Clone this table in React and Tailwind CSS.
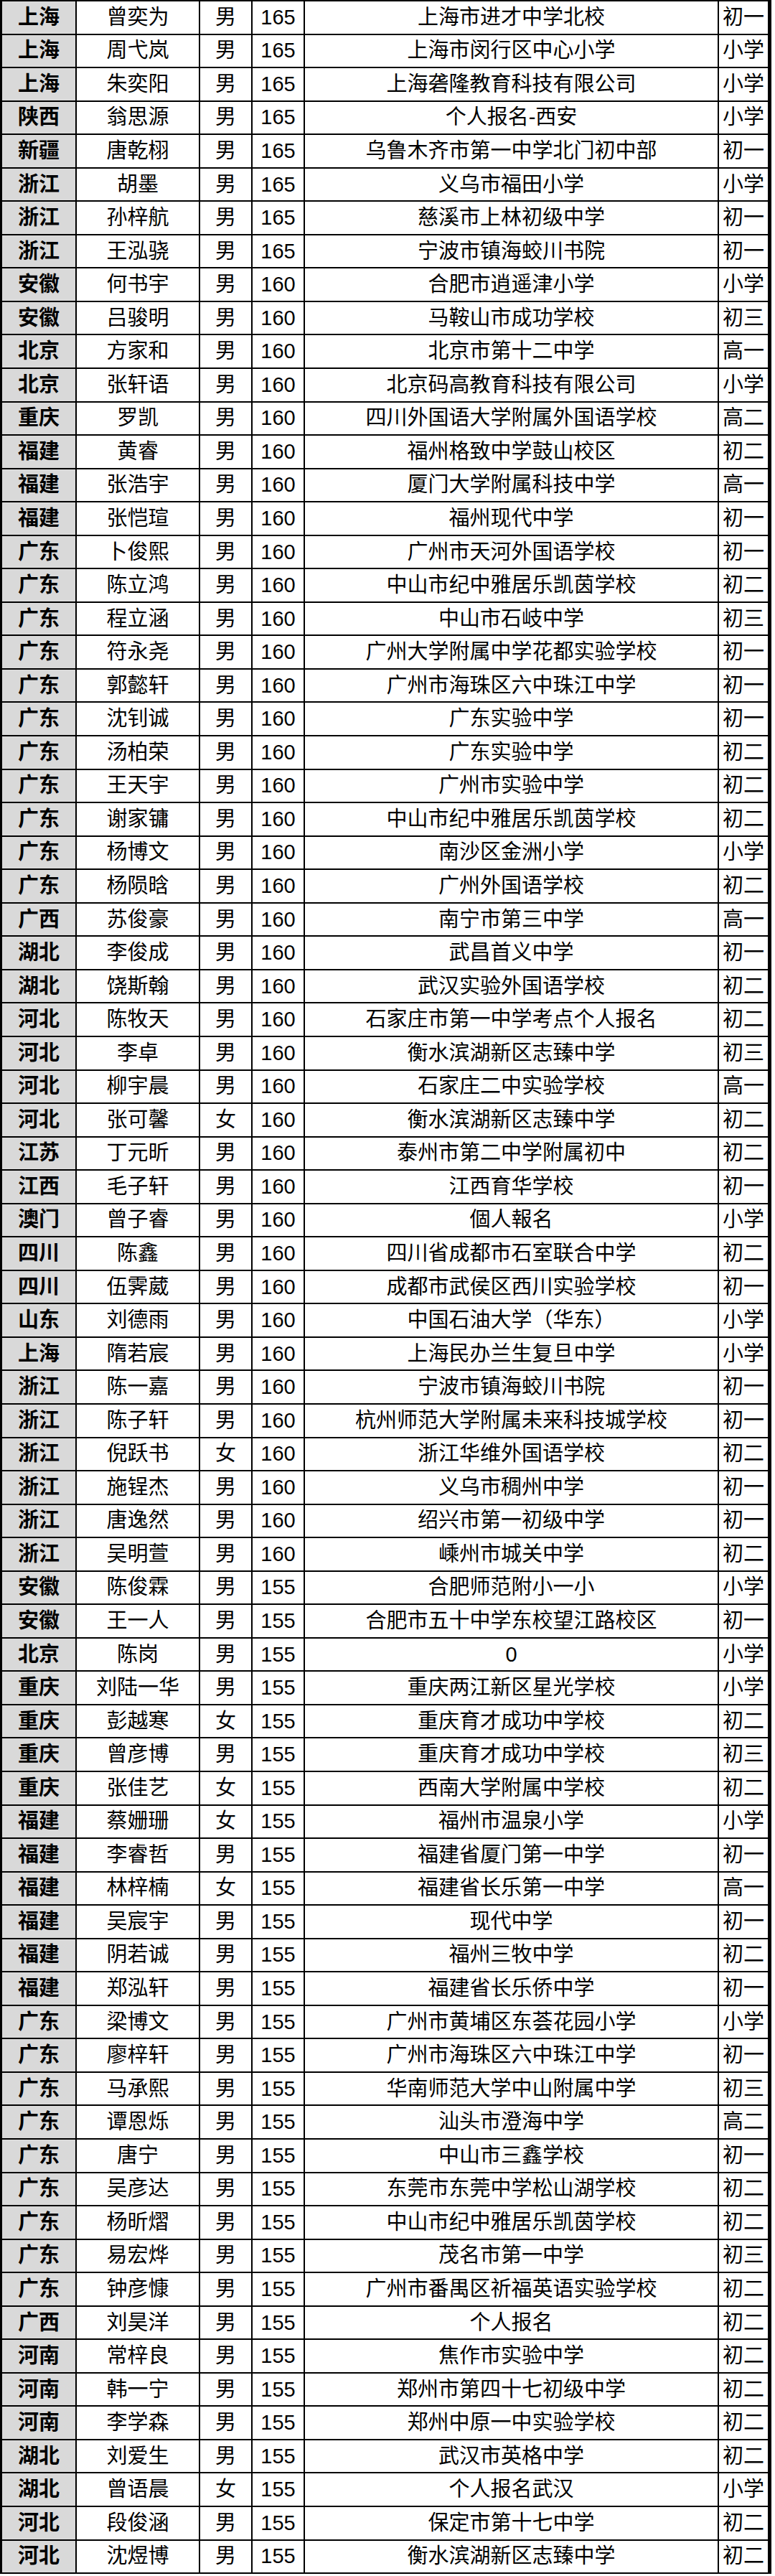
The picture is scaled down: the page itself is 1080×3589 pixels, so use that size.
import React from "react";

const raw = `上海|曾奕为|男|165|上海市进才中学北校|初一
上海|周弋岚|男|165|上海市闵行区中心小学|小学
上海|朱奕阳|男|165|上海砻隆教育科技有限公司|小学
陕西|翁思源|男|165|个人报名-西安|小学
新疆|唐乾栩|男|165|乌鲁木齐市第一中学北门初中部|初一
浙江|胡墨|男|165|义乌市福田小学|小学
浙江|孙梓航|男|165|慈溪市上林初级中学|初一
浙江|王泓骁|男|165|宁波市镇海蛟川书院|初一
安徽|何书宇|男|160|合肥市逍遥津小学|小学
安徽|吕骏明|男|160|马鞍山市成功学校|初三
北京|方家和|男|160|北京市第十二中学|高一
北京|张轩语|男|160|北京码高教育科技有限公司|小学
重庆|罗凯|男|160|四川外国语大学附属外国语学校|高二
福建|黄睿|男|160|福州格致中学鼓山校区|初二
福建|张浩宇|男|160|厦门大学附属科技中学|高一
福建|张恺瑄|男|160|福州现代中学|初一
广东|卜俊熙|男|160|广州市天河外国语学校|初一
广东|陈立鸿|男|160|中山市纪中雅居乐凯茵学校|初二
广东|程立涵|男|160|中山市石岐中学|初三
广东|符永尧|男|160|广州大学附属中学花都实验学校|初一
广东|郭懿轩|男|160|广州市海珠区六中珠江中学|初一
广东|沈钊诚|男|160|广东实验中学|初一
广东|汤柏荣|男|160|广东实验中学|初二
广东|王天宇|男|160|广州市实验中学|初二
广东|谢家镛|男|160|中山市纪中雅居乐凯茵学校|初二
广东|杨博文|男|160|南沙区金洲小学|小学
广东|杨陨晗|男|160|广州外国语学校|初二
广西|苏俊豪|男|160|南宁市第三中学|高一
湖北|李俊成|男|160|武昌首义中学|初一
湖北|饶斯翰|男|160|武汉实验外国语学校|初二
河北|陈牧天|男|160|石家庄市第一中学考点个人报名|初二
河北|李卓|男|160|衡水滨湖新区志臻中学|初三
河北|柳宇晨|男|160|石家庄二中实验学校|高一
河北|张可馨|女|160|衡水滨湖新区志臻中学|初二
江苏|丁元昕|男|160|泰州市第二中学附属初中|初二
江西|毛子轩|男|160|江西育华学校|初一
澳门|曾子睿|男|160|個人報名|小学
四川|陈鑫|男|160|四川省成都市石室联合中学|初二
四川|伍霁葳|男|160|成都市武侯区西川实验学校|初一
山东|刘德雨|男|160|中国石油大学（华东）|小学
上海|隋若宸|男|160|上海民办兰生复旦中学|小学
浙江|陈一嘉|男|160|宁波市镇海蛟川书院|初一
浙江|陈子轩|男|160|杭州师范大学附属未来科技城学校|初一
浙江|倪跃书|女|160|浙江华维外国语学校|初二
浙江|施锃杰|男|160|义乌市稠州中学|初一
浙江|唐逸然|男|160|绍兴市第一初级中学|初一
浙江|吴明萱|男|160|嵊州市城关中学|初二
安徽|陈俊霖|男|155|合肥师范附小一小|小学
安徽|王一人|男|155|合肥市五十中学东校望江路校区|初一
北京|陈岗|男|155|0|小学
重庆|刘陆一华|男|155|重庆两江新区星光学校|小学
重庆|彭越寒|女|155|重庆育才成功中学校|初二
重庆|曾彦博|男|155|重庆育才成功中学校|初三
重庆|张佳艺|女|155|西南大学附属中学校|初二
福建|蔡姗珊|女|155|福州市温泉小学|小学
福建|李睿哲|男|155|福建省厦门第一中学|初一
福建|林梓楠|女|155|福建省长乐第一中学|高一
福建|吴宸宇|男|155|现代中学|初一
福建|阴若诚|男|155|福州三牧中学|初二
福建|郑泓轩|男|155|福建省长乐侨中学|初一
广东|梁博文|男|155|广州市黄埔区东荟花园小学|小学
广东|廖梓轩|男|155|广州市海珠区六中珠江中学|初一
广东|马承熙|男|155|华南师范大学中山附属中学|初三
广东|谭恩烁|男|155|汕头市澄海中学|高二
广东|唐宁|男|155|中山市三鑫学校|初一
广东|吴彦达|男|155|东莞市东莞中学松山湖学校|初二
广东|杨昕熠|男|155|中山市纪中雅居乐凯茵学校|初二
广东|易宏烨|男|155|茂名市第一中学|初三
广东|钟彦慷|男|155|广州市番禺区祈福英语实验学校|初二
广西|刘昊洋|男|155|个人报名|初二
河南|常梓良|男|155|焦作市实验中学|初二
河南|韩一宁|男|155|郑州市第四十七初级中学|初二
河南|李学森|男|155|郑州中原一中实验学校|初二
湖北|刘爱生|男|155|武汉市英格中学|初二
湖北|曾语晨|女|155|个人报名武汉|小学
河北|段俊涵|男|155|保定市第十七中学|初二
河北|沈煜博|男|155|衡水滨湖新区志臻中学|初二`;

const rows = raw.split("\n").map((l) => l.split("|"));

const cell =
  "flex items-center justify-center border-r-2 border-black whitespace-nowrap overflow-hidden";

export default function App() {
  return (
    <div
      className="w-[1080px] bg-white text-[29px] leading-none text-black"
      style={{ fontFamily: '"Liberation Sans", "Noto Sans CJK SC", sans-serif' }}
    >
      <div className="w-[1075px] border-t-2 border-l-[3px] border-black">
        {rows.map((r, i) => (
          <div key={i} className="flex h-[46.56px] border-b-2 border-black">
            <div className={`${cell} w-[104px] bg-[#d9d9d9] font-semibold`}>{r[0]}</div>
            <div className={`${cell} w-[172px]`}>{r[1]}</div>
            <div className={`${cell} w-[73px]`}>{r[2]}</div>
            <div className={`${cell} w-[73px]`}>{r[3]}</div>
            <div className={`${cell} w-[577px]`}>{r[4]}</div>
            <div className={`${cell} w-[73px] border-r-[5px]`}>{r[5]}</div>
          </div>
        ))}
      </div>
    </div>
  );
}
